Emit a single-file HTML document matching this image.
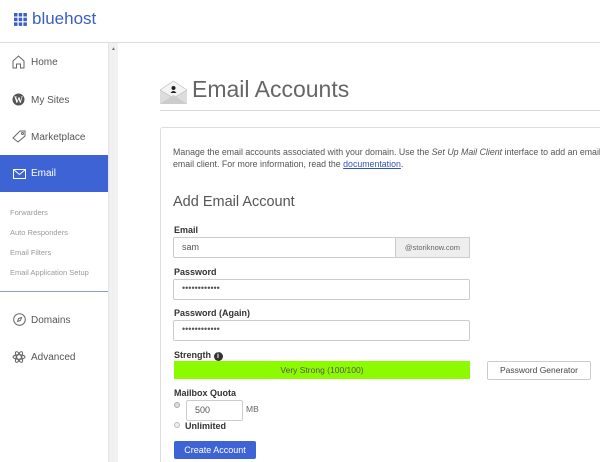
<!DOCTYPE html>
<html style="width:600px;height:462px;overflow:hidden"><head><style>
*{box-sizing:border-box;margin:0;padding:0}
body{width:600px;height:462px;overflow:hidden;background:#fff;font-family:"Liberation Sans",sans-serif;position:relative;color:#333}
.a{position:absolute}
.hdr{left:0;top:0;width:600px;height:43px;border-bottom:1px solid #ddd;background:#fff}
.side{left:0;top:43px;width:108px;height:419px;background:#fff}
.sb{left:108px;top:43px;width:10px;height:419px;background:#f1f1f1;border-left:1px solid #e4e4e4}
.nav{left:0;width:108px;height:37px;font-size:10px;color:#555;padding-left:31px;line-height:37px}
.sub{left:10px;font-size:7.5px;color:#9a9a9a}
.lbl{font-size:9px;font-weight:bold;color:#333}
.inp{border:1px solid #ccc;border-radius:2px;background:#fff;font-size:9px;color:#555;padding-left:8px}
</style></head><body>
<div class="a hdr">
 <svg class="a" style="left:14px;top:13px" width="13" height="13" viewBox="0 0 13 13" fill="#3b5fc4"><rect x="0" y="0" width="3.5" height="3.5"/><rect x="4.7" y="0" width="3.5" height="3.5"/><rect x="9.4" y="0" width="3.5" height="3.5"/><rect x="0" y="4.7" width="3.5" height="3.5"/><rect x="4.7" y="4.7" width="3.5" height="3.5"/><rect x="9.4" y="4.7" width="3.5" height="3.5"/><rect x="0" y="9.4" width="3.5" height="3.5"/><rect x="4.7" y="9.4" width="3.5" height="3.5"/><rect x="9.4" y="9.4" width="3.5" height="3.5"/></svg>
 <div class="a" style="left:32px;top:9px;font-size:17px;line-height:20px;color:#3b5fc4">bluehost</div>
</div>
<div class="a side"></div>
<div class="a sb"><div class="a" style="left:2px;top:3px;font-size:5px;color:#777">▲</div></div>
<svg class="a" style="left:12px;top:55px" width="13" height="14" viewBox="0 0 13 14" fill="none" stroke="#666" stroke-width="1"><path d="M1 6L6.5 1L12 6V13H8.5V9H4.5V13H1Z"/></svg>
<div class="a nav" style="top:44px">Home</div>
<svg class="a" style="left:12px;top:93px" width="13" height="13" viewBox="0 0 13 13"><circle cx="6.5" cy="6.5" r="6" fill="#555"/><text x="6.5" y="10" font-size="9" font-weight="bold" fill="#fff" text-anchor="middle" font-family="Liberation Serif">W</text></svg>
<div class="a nav" style="top:82px">My Sites</div>
<svg class="a" style="left:12px;top:130px" width="14" height="13" viewBox="0 0 14 13" fill="none" stroke="#666"><path d="M1 8L8 1H13V6L6 12Z"/><circle cx="10.5" cy="3.5" r="1"/></svg>
<div class="a nav" style="top:119px">Marketplace</div>
<div class="a nav" style="top:155px;background:#3d63d4;color:#fff">Email</div>
<svg class="a" style="left:13px;top:169px" width="13" height="10" viewBox="0 0 13 10" fill="none" stroke="#fff"><rect x="0.5" y="0.5" width="12" height="9"/><path d="M0.5 0.5L6.5 5.5L12.5 0.5"/></svg>
<div class="a sub" style="top:208px">Forwarders</div>
<div class="a sub" style="top:228px">Auto Responders</div>
<div class="a sub" style="top:248px">Email Filters</div>
<div class="a sub" style="top:268px">Email Application Setup</div>
<div class="a" style="left:0;top:291px;width:108px;height:1px;background:#8a9bd0"></div>
<svg class="a" style="left:13px;top:313px" width="13" height="13" viewBox="0 0 13 13" fill="none" stroke="#666"><circle cx="6.5" cy="6.5" r="5.8"/><path d="M4.5 8.5L5.5 5.5L8.5 4.5L7.5 7.5Z"/></svg>
<div class="a nav" style="top:302px">Domains</div>
<svg class="a" style="left:12px;top:350px" width="14" height="14" viewBox="0 0 14 14" fill="none" stroke="#666"><ellipse cx="7" cy="7" rx="6" ry="2.3"/><ellipse cx="7" cy="7" rx="6" ry="2.3" transform="rotate(60 7 7)"/><ellipse cx="7" cy="7" rx="6" ry="2.3" transform="rotate(120 7 7)"/></svg>
<div class="a nav" style="top:339px">Advanced</div>

<svg class="a" style="left:160px;top:80px" width="27" height="24" viewBox="0 0 27 24"><path d="M0 10L13.5 1L27 10V24H0Z" fill="#ddd"/><path d="M0 10L13.5 1L27 10L13.5 18Z" fill="#f4f4f4" stroke="#bbb" stroke-width="0.6"/><circle cx="13.5" cy="8" r="2" fill="#222"/><path d="M10.5 13Q13.5 9 16.5 13Z" fill="#222"/><path d="M0 24L13.5 15L27 24Z" fill="#ccc"/></svg>
<div class="a" style="left:192px;top:76px;font-size:23px;color:#666">Email Accounts</div>
<div class="a" style="left:160px;top:110px;width:440px;height:1px;background:#d5d9e0"></div>
<div class="a" style="left:160px;top:127px;width:440px;height:335px;border:1px solid #ddd;border-right:none;border-bottom:none;border-radius:3px 0 0 0"></div>
<div class="a" style="left:173px;top:146px;font-size:8.8px;color:#555;line-height:12px;white-space:nowrap;width:427px;overflow:hidden">Manage the email accounts associated with your domain. Use the <i>Set Up Mail Client</i> interface to add an email<br>email client. For more information, read the <span style="color:#3355bb;text-decoration:underline">documentation</span>.</div>
<div class="a" style="left:173px;top:194px;font-size:14.5px;color:#555">Add Email Account</div>
<div class="a lbl" style="left:174px;top:225px">Email</div>
<div class="a inp" style="left:173px;top:237px;width:297px;height:21px;line-height:19px">sam</div>
<div class="a" style="left:395px;top:237px;width:75px;height:21px;background:#eee;border:1px solid #ccc;font-size:7.5px;color:#666;text-align:center;line-height:19px">@storiknow.com</div>
<div class="a lbl" style="left:174px;top:267px">Password</div>
<div class="a inp" style="left:173px;top:279px;width:297px;height:21px;line-height:17px">••••••••••••</div>
<div class="a lbl" style="left:174px;top:308px">Password (Again)</div>
<div class="a inp" style="left:173px;top:320px;width:297px;height:21px;line-height:17px">••••••••••••</div>
<div class="a lbl" style="left:174px;top:350px">Strength <span style="display:inline-block;width:9px;height:9px;border-radius:50%;background:#333;color:#fff;font-size:7px;text-align:center;line-height:9px">i</span></div>
<div class="a" style="left:174px;top:361px;width:296px;height:18px;background:#8dfb00;font-size:8.5px;color:#555;text-align:center;line-height:18px">Very Strong (100/100)</div>
<div class="a" style="left:487px;top:361px;width:104px;height:19px;border:1px solid #ccc;border-radius:2px;font-size:8.5px;color:#444;text-align:center;line-height:17px">Password Generator</div>
<div class="a lbl" style="left:174px;top:388px">Mailbox Quota</div>
<div class="a" style="left:174px;top:402px;width:6px;height:6px;border-radius:50%;border:1px solid #aaa;background:#ddd"></div>
<div class="a inp" style="left:186px;top:400px;width:57px;height:21px;line-height:19px">500</div>
<div class="a" style="left:246px;top:404px;font-size:8.5px;color:#666">MB</div>
<div class="a" style="left:174px;top:422px;width:6px;height:6px;border-radius:50%;border:1px solid #bbb;background:#eee"></div>
<div class="a lbl" style="left:185px;top:421px">Unlimited</div>
<div class="a" style="left:174px;top:441px;width:82px;height:18px;background:#3d63d4;border-radius:2px;color:#fff;font-size:9px;text-align:center;line-height:18px">Create Account</div>
</body></html>
